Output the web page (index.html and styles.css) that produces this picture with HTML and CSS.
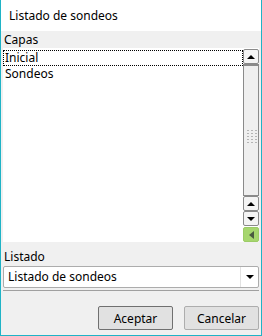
FILE: index.html
```html
<!DOCTYPE html>
<html lang="es">
<head>
  <meta charset="UTF-8">
  <title>Listado de sondeos</title>
  <link rel="stylesheet" href="styles.css">
</head>
<body>
  <div class="window">
    <div class="titlebar">Listado de sondeos</div>
    <div class="content">
      <div class="label">Capas</div>
      <div class="listbox">
        <div class="items">
          <div class="item focus">Inicial</div>
          <div class="item">Sondeos</div>
        </div>
        <div class="scrollbar">
          <div class="sbtn"><span class="tri up"></span></div>
          <div class="thumb"><div class="grip"></div></div>
          <div class="sbtn"><span class="tri up"></span></div>
          <div class="sbtn"><span class="tri down"></span></div>
          <div class="sbtn green"><span class="tri left"></span></div>
        </div>
      </div>
      <div class="label label2">Listado</div>
      <div class="combo">
        <div class="combo-text">Listado de sondeos</div>
        <div class="combo-arrow"><span class="tri down"></span></div>
      </div>
      <div class="separator"></div>
      <div class="buttons">
        <button class="btn default">Aceptar</button>
        <button class="btn">Cancelar</button>
      </div>
    </div>
  </div>
</body>
</html>
```

FILE: styles.css
```css
body {
  margin: 0;
  font-family: 'Noto Sans', sans-serif;
  font-size: 12px;
  color: #000;
}
.window {
  width: 262px;
  height: 336px;
  box-sizing: border-box;
  border: 1px solid #1fb3c6;
  border-top: none;
  background: #f0f0f0;
  display: flex;
  flex-direction: column;
}
.titlebar {
  height: 31px;
  line-height: 31px;
  padding-left: 8px;
  background: #fff;
  font-size: 12px;
}
.content {
  padding: 0 2px;
  display: flex;
  flex-direction: column;
}
.label {
  height: 17px;
  line-height: 17px;
  padding-left: 1px;
}
.label2 {
  margin-top: 6px;
  height: 18px;
}
.listbox {
  height: 194px;
  background: #fff;
  display: flex;
}
.items {
  flex: 1;
  padding-top: 2px;
}
.item {
  height: 16px;
  line-height: 15px;
  padding-left: 2px;
  box-sizing: border-box;
}
.item.focus {
  border: 1px dotted #000;
  padding-left: 1px;
  line-height: 13px;
}
.scrollbar {
  width: 16px;
  display: flex;
  flex-direction: column;
  padding-top: 1px;
}
.sbtn {
  height: 15px;
  box-sizing: border-box;
  border: 1px solid #8a8a8a;
  border-radius: 2px;
  background: #f4f4f4;
  display: flex;
  align-items: center;
  justify-content: center;
}
.thumb {
  flex: 1;
  box-sizing: border-box;
  border: 1px solid #8a8a8a;
  border-top: 2px solid #8a8a8a;
  background: #efefef;
  display: flex;
  align-items: center;
  justify-content: center;
}
.grip {
  width: 11px;
  height: 16px;
  margin-top: 12px;
  background-image: radial-gradient(circle, #b4b4b4 0.9px, transparent 1px);
  background-size: 4px 3px;
}
.sbtn.green {
  background: #a6d66e;
  border-color: #9ccc66;
  margin-top: 1px;
}
.tri {
  width: 0;
  height: 0;
  border-style: solid;
}
.tri.up {
  border-width: 0 4px 4px 4px;
  border-color: transparent transparent #000 transparent;
}
.tri.down {
  border-width: 4px 4px 0 4px;
  border-color: #000 transparent transparent transparent;
}
.tri.left {
  border-width: 4px 5px 4px 0;
  border-color: transparent #4a5a40 transparent transparent;
}
.combo {
  height: 22px;
  box-sizing: border-box;
  border: 1px solid #acacac;
  border-radius: 2px;
  background: #fff;
  display: flex;
}
.combo-text {
  flex: 1;
  padding-left: 4px;
  line-height: 19px;
}
.combo-arrow {
  width: 17px;
  border-left: 1px solid #e2e2e2;
  display: flex;
  align-items: center;
  justify-content: center;
}
.separator {
  height: 1px;
  margin-top: 2px;
  background: #a0a0a0;
}
.buttons {
  display: flex;
  justify-content: flex-end;
  gap: 11px;
  margin-top: 15px;
}
.btn {
  width: 75px;
  height: 24px;
  font-family: 'Noto Sans', sans-serif;
  font-size: 12px;
  border: 1px solid #adadad;
  border-radius: 2px;
  background: #e1e1e1;
  padding: 0;
  color: #000;
}
.btn.default {
  border-color: #707070;
}
```
